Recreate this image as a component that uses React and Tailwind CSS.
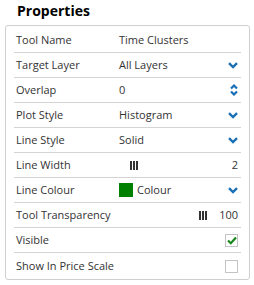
const Chevron = () => (
  <svg width="10" height="7" viewBox="0 0 10 7" className="text-[#1a6fb5]">
    <path d="M1 1.2 L5 5 L9 1.2" fill="none" stroke="currentColor" strokeWidth="2.4" />
  </svg>
);

const Spinner = () => (
  <svg width="8" height="12" viewBox="0 0 8 12" className="text-[#1a6fb5]">
    <path d="M1 4.5 L4 1.5 L7 4.5 M1 7.5 L4 10.5 L7 7.5" fill="none" stroke="currentColor" strokeWidth="2.2" />
  </svg>
);

const Bars = () => (
  <svg width="8" height="9" viewBox="0 0 8 9">
    <rect x="0" y="0" width="2" height="9" fill="#333" />
    <rect x="3" y="0" width="2" height="9" fill="#333" />
    <rect x="6" y="0" width="2" height="9" fill="#333" />
  </svg>
);

const rows = [
  { label: "Tool Name", value: "Time Clusters" },
  { label: "Target Layer", value: "All Layers", right: <Chevron /> },
  { label: "Overlap", value: "0", right: <Spinner /> },
  { label: "Plot Style", value: "Histogram", right: <Chevron /> },
  { label: "Line Style", value: "Solid", right: <Chevron /> },
  { label: "Line Width", lineWidth: true },
  { label: "Line Colour", colour: true, right: <Chevron /> },
  { label: "Tool Transparency", transparency: true },
  { label: "Visible", check: true },
  { label: "Show In Price Scale", check: false },
];

export default function App() {
  return (
    <div className="h-[285px] w-[254px] bg-white font-['Open_Sans',sans-serif] text-[#333]">
      <h1 className="pl-[17px] pt-[1px] text-[14px] font-bold leading-[20px] text-black">Properties</h1>
      <div className="mx-[5px] mt-[4px] w-[245px] rounded-[3px] border border-[#cfcfcf] px-[8px] pt-[2px]">
        {rows.map((row, i) => (
          <div
            key={row.label}
            className={
              "flex h-[25px] items-center whitespace-nowrap pl-[2px] pr-[3px] text-[11px] " +
              (i < rows.length - 1 ? "border-b border-[#d4d4d4]" : "h-[26px]")
            }
          >
            <span className="w-[103px] shrink-0">{row.label}</span>
            {row.value !== undefined && <span className="flex-1">{row.value}</span>}
            {row.lineWidth && (
              <div className="flex flex-1 items-center">
                <span className="ml-[11px]"><Bars /></span>
                <span className="ml-auto">2</span>
              </div>
            )}
            {row.colour && (
              <div className="flex flex-1 items-center gap-[4px]">
                <span className="h-[14px] w-[14px] bg-[#008000]" />
                <span>Colour</span>
              </div>
            )}
            {row.transparency && (
              <div className="flex flex-1 items-center justify-end gap-[12px]">
                <Bars />
                <span>100</span>
              </div>
            )}
            {row.check !== undefined && (
              <div className="flex flex-1 justify-end">
                <span className="flex h-[13px] w-[13px] items-center justify-center border border-[#c4c4c4] bg-white">
                  {row.check && (
                    <svg width="10" height="9" viewBox="0 0 10 9">
                      <path d="M1 4.5 L3.8 7.2 L9 1.5" fill="none" stroke="#17881a" strokeWidth="2.2" />
                    </svg>
                  )}
                </span>
              </div>
            )}
            {row.right && <span className="flex w-[10px] justify-end">{row.right}</span>}
          </div>
        ))}
      </div>
    </div>
  );
}
